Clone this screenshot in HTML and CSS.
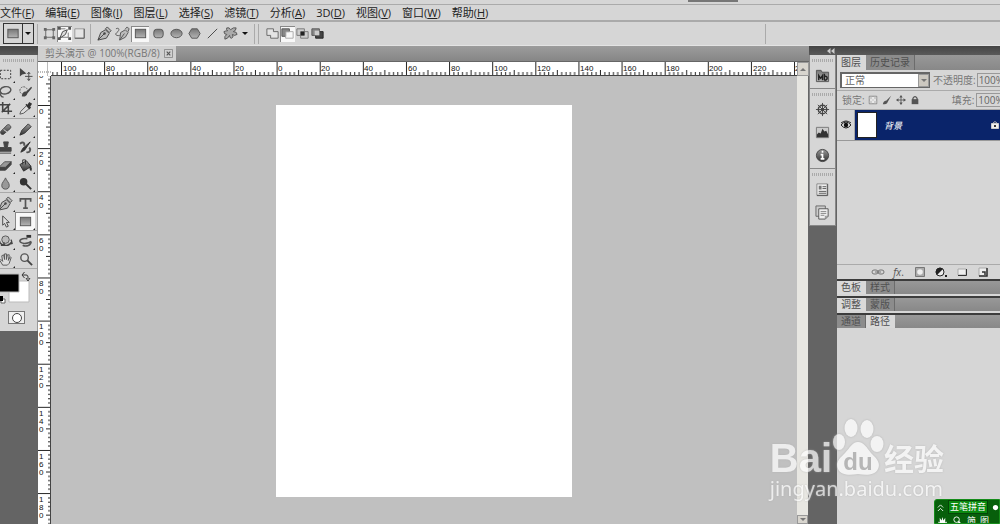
FILE: index.html
```html
<!DOCTYPE html>
<html lang="zh-CN">
<head>
<meta charset="utf-8">
<title>剪头演示 @ 100%(RGB/8)</title>
<link rel="stylesheet" href="styles.css">
</head>
<body>
<svg class="defs" aria-hidden="true">
  <defs>
    <linearGradient id="metal" x1="0" y1="0" x2="0" y2="1"><stop offset="0" stop-color="#777"/><stop offset="1" stop-color="#b4b4b4"/></linearGradient>
    <linearGradient id="dark" x1="0" y1="0" x2="0" y2="1"><stop offset="0" stop-color="#999"/><stop offset="1" stop-color="#333"/></linearGradient>
    <pattern id="ticks-x" x="10" y="0" width="43.12" height="13" patternUnits="userSpaceOnUse">
      <path d="M.5 0V13M4.8 10V13M9.1 10V13M13.4 10V13M17.7 10V13M22 8V13M26.4 10V13M30.7 10V13M35 10V13M39.3 10V13" stroke="#222" fill="none"/>
    </pattern>
    <pattern id="ticks-y" x="0" y="29" width="13" height="43.12" patternUnits="userSpaceOnUse">
      <path d="M0 .5H13M10 4.8H13M10 9.1H13M10 13.4H13M10 17.7H13M8 22H13M10 26.4H13M10 30.7H13M10 35H13M10 39.3H13" stroke="#222" fill="none"/>
    </pattern>
    <symbol id="pen" viewBox="0 0 16 16"><path d="M1 15l3-8 5-3 4 4-3 5zM9 3l2-2 4 4-2 2z" fill="#bbb" stroke="#444"/><path d="M1 15l7-7" stroke="#444"/><circle cx="8" cy="8" r="1.300" fill="#444"/></symbol>
    <symbol id="square" viewBox="0 0 16 16"><rect x="2.500" y="3.500" width="11" height="9" fill="url(#metal)" stroke="#555"/></symbol>
  </defs>
</svg>

<div class="app">
  <div class="titlestrip"><span class="titlestrip-handle"></span></div>

  <nav class="menubar" aria-label="主菜单">
    <button>文件(<u>F</u>)</button><button>编辑(<u>E</u>)</button><button>图像(<u>I</u>)</button><button>图层(<u>L</u>)</button><button>选择(<u>S</u>)</button><button>滤镜(<u>T</u>)</button><button>分析(<u>A</u>)</button><button>3D(<u>D</u>)</button><button>视图(<u>V</u>)</button><button>窗口(<u>W</u>)</button><button>帮助(<u>H</u>)</button>
  </nav>

  <div class="options">
    <button class="preset" aria-label="工具预设"><svg viewBox="0 0 16 16"><use href="#square"/></svg><span class="preset-arrow"></span></button>
    <span class="rule"></span>
    <div class="modes">
      <button aria-label="形状图层"><svg viewBox="0 0 16 16"><path d="M4 4h8v8H4z" fill="#ddd" stroke="#666"/><path d="M2 2h3v3H2zM11 2h3v3h-3zM2 11h3v3H2zM11 11h3v3h-3z" fill="#666"/></svg></button>
      <button class="on" aria-label="路径"><svg viewBox="0 0 16 16"><path d="M3 3h6M12 7v5M3 12h9" fill="none" stroke="#777"/><path d="M3 13l3-7 5-2-2 5z" fill="#ddd" stroke="#444"/><path d="M1 1h3v3H1zM12 1h3v3h-3zM1 12h3v3H1zM12 12h3v3h-3z" fill="#555"/></svg></button>
      <button aria-label="填充像素"><svg viewBox="0 0 16 16"><path d="M3 3h10v10H3z" fill="#e4e4e4" stroke="#999"/><path d="M3 13h10V3" fill="none" stroke="#555"/></svg></button>
    </div>
    <span class="rule"></span>
    <div class="shapes">
      <button aria-label="钢笔"><svg viewBox="0 0 16 16"><use href="#pen"/></svg></button>
      <button aria-label="自由钢笔"><svg viewBox="0 0 16 16"><path d="M5 15l1-8 5-3 3 3-3 5zM11 3l2-2 2 2-1 3" fill="#bbb" stroke="#555"/><path d="M5 15l5-7M1 3c4-2 4 2 1 4s0 4 3 3" fill="none" stroke="#555"/></svg></button>
      <button class="on" aria-label="矩形"><svg viewBox="0 0 16 16"><use href="#square"/></svg></button>
      <button aria-label="圆角矩形"><svg viewBox="0 0 16 16"><rect x="3" y="3.500" width="10" height="9" rx="3" fill="url(#metal)" stroke="#555"/></svg></button>
      <button aria-label="椭圆"><svg viewBox="0 0 16 16"><ellipse cx="8" cy="8" rx="6" ry="4.500" fill="url(#metal)" stroke="#555"/></svg></button>
      <button aria-label="多边形"><svg viewBox="0 0 16 16"><path d="M5 3h6l3 5-3 5H5L2 8z" fill="url(#metal)" stroke="#555"/></svg></button>
      <button aria-label="直线"><svg viewBox="0 0 16 16"><path d="M3 13L13 3" stroke="#444"/></svg></button>
      <button aria-label="自定形状"><svg viewBox="0 0 16 16"><path d="M4 2q3-1 4 2 3-3 6-2 0 3-3 4 4 0 4 3-3 2-5 0 2 3-1 4-2 0-2-3-2 4-5 4-1-3 2-5-3 0-3-3 2-1 4-1-2-1-1-3z" fill="#aaa" stroke="#555"/></svg></button>
      <button class="narrow" aria-label="几何选项"><span class="arrow"></span></button>
    </div>
    <span class="rule"></span><span class="rule"></span>
    <div class="combine">
      <button aria-label="添加到路径区域"><svg viewBox="0 0 16 16"><path d="M2 3h7v3h5v7H6v-3H2z" fill="#e4e4e4" stroke="#666"/></svg></button>
      <button class="on" aria-label="从路径区域减去"><svg viewBox="0 0 16 16"><path d="M2 3h8v3H6v5H2z" fill="#888" stroke="#555"/><path d="M6 6h8v7H6z" fill="none" stroke="#aaa"/></svg></button>
      <button aria-label="交叉路径区域"><svg viewBox="0 0 16 16"><path d="M2 3h8v7H2zM6 6h8v7H6z" fill="#ccc" stroke="#777"/><path d="M6 6h4v4H6z" fill="#222"/></svg></button>
      <button aria-label="重叠路径区域除外"><svg viewBox="0 0 16 16"><path d="M2 3h8v7H2z" fill="#888" stroke="#555"/><path d="M6 6h8v7H6z" fill="#444" stroke="#222"/><path d="M5 5h5v5H5z" fill="#ccc"/></svg></button>
    </div>
    <span class="rule rule-end"></span>
  </div>

  <div class="workspace">
    <aside class="toolbox">
      <div class="toolbox-head"></div>
      <div class="tools">
        <div class="gripper"></div>
        <div class="toolgroup">
          <button aria-label="矩形选框"><svg viewBox="0 0 16 16"><path d="M2.500 3.500h11v9h-11z" fill="none" stroke="#333" stroke-dasharray="2 1.500"/></svg></button>
          <button class="single" aria-label="移动"><svg viewBox="0 0 16 16"><path d="M2 1v9l2.500-2L9 7z" fill="#444"/><path d="M11.500 6v8M7.500 10h8M10 7.500l1.500-2 1.500 2M10 12.500l1.500 2 1.500-2" fill="none" stroke="#444"/></svg></button>
          <button aria-label="套索"><svg viewBox="0 0 16 16"><path d="M4 10C1 8 2 4 7 3s8 2 6 5-7 3-9 2-2 4 2 4" fill="none" stroke="#555" stroke-width="1.500"/></svg></button>
          <button aria-label="快速选择"><svg viewBox="0 0 16 16"><circle cx="6" cy="7" r="4" fill="none" stroke="#555" stroke-dasharray="2 1"/><path d="M4 13c1-5 3-5 5-5l5-5 1 1-5 6c-1 3-3 4-6 3z" fill="#444"/></svg></button>
          <button aria-label="裁剪"><svg viewBox="0 0 16 16"><path d="M5 1v10h10M1 4h10v10M4 12l9-9" fill="none" stroke="#444" stroke-width="1.700"/></svg></button>
          <button aria-label="吸管"><svg viewBox="0 0 16 16"><path d="M2 14l1-3 6-6 3 3-6 5z" fill="#ddd" stroke="#555"/><path d="M8 4l1-1 1 1 2-3 3 2-2 3 1 1-2 2z" fill="#333"/></svg></button>
        </div>
        <div class="toolgroup tall">
          <button aria-label="污点修复画笔"><svg viewBox="0 0 16 16"><path d="M3 10l7-7c2-1 5 2 3 4l-7 6c-2 1-4-1-3-3z" fill="url(#dark)" stroke="#444"/><path d="M6 8l4 3" stroke="#ddd"/></svg></button>
          <button aria-label="画笔"><svg viewBox="0 0 16 16"><path d="M2 14l2-5 7-7 3 3-7 7z" fill="url(#dark)" stroke="#333"/></svg></button>
          <button aria-label="仿制图章"><svg viewBox="0 0 16 16"><path d="M6 2h5l-1 6h4v4H2V8h5zM2 14h12" fill="#444" stroke="#444"/></svg></button>
          <button aria-label="历史记录画笔"><svg viewBox="0 0 16 16"><path d="M3 13l2-4 8-7-6 9z" fill="#333" stroke="#333"/><path d="M2 4c4-3 6 0 4 2M9 13c4 1 5-3 3-5" fill="none" stroke="#555" stroke-width="2"/></svg></button>
          <button aria-label="橡皮擦"><svg viewBox="0 0 16 16"><path d="M1 10l6-6h7l-6 6z" fill="#999" stroke="#555"/><path d="M1 10v3h7l6-6V4L8 10z" fill="#444" stroke="#444"/></svg></button>
          <button aria-label="油漆桶"><svg viewBox="0 0 16 16"><path d="M2 7l7-4 5 6-8 5z" fill="url(#dark)" stroke="#333"/><path d="M5 7V2h3v5" fill="none" stroke="#333"/><path d="M13 8q3 3 1 6-3-2-1-6z" fill="#333"/></svg></button>
          <button aria-label="模糊"><svg viewBox="0 0 16 16"><path d="M8 2c1 3 4 5 4 8s-2 4-4 4-4-1-4-4 3-5 4-8z" fill="#999" stroke="#555"/></svg></button>
          <button aria-label="减淡"><svg viewBox="0 0 16 16"><circle cx="6" cy="6" r="4" fill="#333"/><path d="M8 8l6 6" stroke="#333" stroke-width="2"/></svg></button>
        </div>
        <div class="toolgroup tall">
          <button aria-label="钢笔工具"><svg viewBox="0 0 16 16"><use href="#pen"/></svg></button>
          <button aria-label="文字"><svg viewBox="0 0 16 16"><path d="M2.500 6V3h11v3M8 3v10M5.500 13h5" fill="none" stroke="#555" stroke-width="1.800"/></svg></button>
          <button aria-label="路径选择"><svg viewBox="0 0 16 16"><path d="M5 2v10l2-2 2 4 2-1-2-4h3z" fill="#ddd" stroke="#444"/></svg></button>
          <button class="on" aria-label="矩形工具"><svg viewBox="0 0 16 16"><use href="#square"/></svg></button>
        </div>
        <div class="toolgroup tall">
          <button aria-label="3D 旋转"><svg viewBox="0 0 16 16"><circle cx="8" cy="6" r="4" fill="#bbb" stroke="#555"/><path d="M2 7c-2 4 9 8 12 2M3 12h4l-1-3M14 6l1 4-4 1" fill="none" stroke="#444" stroke-width="1.500"/></svg></button>
          <button aria-label="3D 环绕"><svg viewBox="0 0 16 16"><path d="M10 5C4 4 0 7 3 9s8 1 11-1M14 8c0 4-5 6-9 4" fill="none" stroke="#555" stroke-width="1.700"/><path d="M9 1h5v3H9z" fill="#333"/></svg></button>
          <button aria-label="抓手"><svg viewBox="0 0 16 16"><path d="M5 14L2 9l1-1 2 2-1-6 2-1 1 5V2h2v6l1-5h2l-1 6 2-4 1 1-2 6-2 2z" fill="#ddd" stroke="#555"/></svg></button>
          <button class="single" aria-label="缩放"><svg viewBox="0 0 16 16"><circle cx="7" cy="6" r="4" fill="#ddd" stroke="#555" stroke-width="1.500"/><path d="M10 9l5 5" stroke="#444" stroke-width="2"/></svg></button>
        </div>
        <div class="swatches">
          <svg viewBox="0 0 38 34" aria-label="前景色和背景色"><path d="M9 9h20v21H9z" fill="#fff" stroke="#bbb"/><path d="M-2 2h21v18H-2z" fill="#000" stroke="#bbb"/><path d="M23 3h3c2 0 2 1 2 4M24.500 0L22 3l2.500 3M26 6l2 3 2-3" fill="none" stroke="#333"/><path d="M1 27h4v4H1z" fill="#fff" stroke="#666"/><path d="M-2 24h5v5h-5z" fill="#000"/></svg>
        </div>
        <button class="quickmask" aria-label="快速蒙版"><svg viewBox="0 0 16 12"><circle cx="8" cy="6" r="4.500" fill="#fff" stroke="#444"/></svg></button>
      </div>
    </aside>

    <main class="document">
      <div class="doctabs"><div class="doctab"><span>剪头演示 @ 100%(RGB/8)</span><button aria-label="关闭"><svg viewBox="0 0 10 10"><path d="M.5.5h9v9h-9z" fill="none" stroke="#888"/><path d="M3 3l4 4M7 3L3 7" stroke="#555" stroke-width="1.300"/></svg></button></div></div>
      <div class="view">
        <svg class="corner" viewBox="0 0 13 13"><path d="M0 9.500h13M9.500 0v13" stroke="#777" stroke-dasharray="1 1"/></svg>
        <svg class="ruler-x"><rect width="100%" height="13" fill="url(#ticks-x)"/>
          <g class="nums"><text x="12" y="9">100</text><text x="55" y="9">80</text><text x="98" y="9">60</text><text x="141" y="9">40</text><text x="184" y="9">20</text><text x="227" y="9">0</text><text x="270" y="9">20</text><text x="313" y="9">40</text><text x="357" y="9">60</text><text x="400" y="9">80</text><text x="443" y="9">100</text><text x="486" y="9">120</text><text x="529" y="9">140</text><text x="572" y="9">160</text><text x="615" y="9">180</text><text x="658" y="9">200</text><text x="702" y="9">220</text><text x="744" y="9">240</text></g></svg>
        <button class="scroll-up" aria-label="向上滚动"><span class="arrow up"></span></button>
        <svg class="ruler-y"><rect width="13" height="100%" fill="url(#ticks-y)"/>
          <g class="nums"><text x="1" y="2">0</text><text x="1" y="38">0</text>
          <text><tspan x="1" y="81">2</tspan><tspan x="1" y="89">0</tspan></text>
          <text><tspan x="1" y="124">4</tspan><tspan x="1" y="132">0</tspan></text>
          <text><tspan x="1" y="167">6</tspan><tspan x="1" y="175">0</tspan></text>
          <text><tspan x="1" y="210">8</tspan><tspan x="1" y="218">0</tspan></text>
          <text><tspan x="1" y="253">1</tspan><tspan x="1" y="261">0</tspan><tspan x="1" y="269">0</tspan></text>
          <text><tspan x="1" y="296">1</tspan><tspan x="1" y="304">2</tspan><tspan x="1" y="312">0</tspan></text>
          <text><tspan x="1" y="340">1</tspan><tspan x="1" y="348">4</tspan><tspan x="1" y="356">0</tspan></text>
          <text><tspan x="1" y="383">1</tspan><tspan x="1" y="391">6</tspan><tspan x="1" y="399">0</tspan></text>
          <text><tspan x="1" y="426">1</tspan><tspan x="1" y="434">8</tspan><tspan x="1" y="442">0</tspan></text></g></svg>
        <div class="canvas"><div class="page"></div></div>
        <div class="scrollbar"><button aria-label="向下滚动"><span class="arrow down"></span></button></div>
      </div>
    </main>

    <aside class="right">
      <div class="right-head"><svg viewBox="0 0 8 6"><path d="M3.500 0v6L0 3zM7.500 0v6L4 3z" fill="#ccc"/></svg></div>
      <div class="right-body">
        <div class="dock">
          <div class="dockgroup"><div class="gripper"></div>
            <button aria-label="Mini Bridge"><svg viewBox="0 0 16 16"><path d="M1.500 2.500h5l1 2h7v10h-13z" fill="url(#metal)" stroke="#555"/><path d="M4 13V8l2 3 2-3v5M10 6v7M10 9c4-1 4 4 0 4" fill="none" stroke="#222" stroke-width="1.500"/></svg></button>
          </div>
          <div class="dockgroup"><div class="gripper"></div>
            <button aria-label="导航器"><svg viewBox="0 0 16 16"><circle cx="8" cy="8" r="4.500" fill="none" stroke="#444" stroke-width="1.500"/><path d="M8 1v14M1 8h14M3 3l10 10M13 3L3 13" stroke="#444"/><circle cx="8" cy="8" r="2" fill="#444"/></svg></button>
            <button aria-label="直方图"><svg viewBox="0 0 16 16"><path d="M1.500 2.500h13v11h-13z" fill="#ccc" stroke="#777"/><path d="M2 13v-3l2-2 2 1 2-5 2 3 2-1 2 4v3z" fill="#333"/></svg></button>
            <button aria-label="信息"><svg viewBox="0 0 16 16"><circle cx="8" cy="8" r="6.500" fill="url(#dark)" stroke="#444"/><path d="M8 3v2M6 7h2v4M6 11.500h4" fill="none" stroke="#fff" stroke-width="1.800"/></svg></button>
          </div>
          <div class="dockgroup"><div class="gripper"></div>
            <button aria-label="字符样式"><svg viewBox="0 0 16 16"><path d="M2 2h11v12H2z" fill="#eee" stroke="#888"/><path d="M13.500 2v12.500H2M8 5h4M8 7h4M4 10h8M4 12h8" fill="none" stroke="#555"/><path d="M4 4h3v4H4z" fill="#777"/></svg></button>
            <button aria-label="图层复合"><svg viewBox="0 0 16 16"><path d="M1 1h10v11H1z" fill="#ccc" stroke="#666"/><path d="M4 4h10v8l-3 3H4z" fill="#eee" stroke="#555"/><path d="M6 7h6M6 9h6M6 11h4M11 15v-3h3" fill="none" stroke="#888"/></svg></button>
          </div>
        </div>

        <div class="panels">
          <section class="panel layers">
            <div class="tabs"><button class="active">图层</button><button>历史记录</button></div>
            <div class="row blend">
              <label class="combo"><select aria-label="混合模式"><option>正常</option></select><span class="combo-arrow"><span class="arrow"></span></span></label>
              <label for="opacity">不透明度:</label><input id="opacity" value="100%">
            </div>
            <div class="row lock">
              <span class="locklabel">锁定:</span>
              <button aria-label="锁定透明像素"><svg viewBox="0 0 12 12"><path d="M1.500 1.500h9v9h-9z" fill="#eee" stroke="#777"/><path d="M2 2h3v3H2zM7 2h3v3H7zM5 5h2v2H5zM2 7h3v3H2zM7 7h3v3H7z" fill="#ccc"/></svg></button>
              <button aria-label="锁定图像像素"><svg viewBox="0 0 12 12"><path d="M1 11c1-4 3-4 4-4l6-6-4 7c-1 3-3 3-6 3z" fill="#555"/></svg></button>
              <button aria-label="锁定位置"><svg viewBox="0 0 12 12"><path d="M6 1v10M1 6h10" stroke="#555"/><path d="M4 3l2-3 2 3zM4 9l2 3 2-3zM3 4L0 6l3 2zM9 4l3 2-3 2z" fill="#555"/></svg></button>
              <button aria-label="锁定全部"><svg viewBox="0 0 12 12"><path d="M3.500 6V4q2.500-4 5 0v2" fill="none" stroke="#555" stroke-width="1.500"/><path d="M2 5h8v6H2z" fill="#555"/></svg></button>
              <label class="push" for="fill">填充:</label><input id="fill" value="100%">
            </div>
            <div class="layer">
              <button class="eye" aria-label="可见性"><svg viewBox="0 0 12 10"><path d="M1 5q5-6 10 0-5 6-10 0z" fill="#ddd" stroke="#222"/><circle cx="6" cy="5" r="2.200" fill="#111"/><path d="M1 3q5-4 10 0" fill="none" stroke="#222"/></svg></button>
              <div class="layer-main"><span class="thumb"></span><span class="layer-name">背景</span><svg class="layer-lock" viewBox="0 0 8 10"><path d="M2 4V3q2-3 4 0v1" fill="none" stroke="#aaa"/><path d="M.5 3.500h7v5h-7z" fill="#eee" stroke="#ccc"/><path d="M3 5h2v2H3z" fill="#333"/></svg></div>
            </div>
            <div class="layer-space"></div>
            <div class="layer-actions">
              <button aria-label="链接图层"><svg viewBox="0 0 14 12"><rect x="1" y="4" width="6" height="4" rx="2" fill="none" stroke="#777"/><rect x="7" y="4" width="6" height="4" rx="2" fill="none" stroke="#777"/><path d="M4 6h6" stroke="#777"/></svg></button>
              <button class="fx" aria-label="图层样式"><i>fx</i>.</button>
              <button aria-label="添加蒙版"><svg viewBox="0 0 14 12"><path d="M2.500 1.500h9v9h-9z" fill="#aaa" stroke="#777"/><circle cx="7" cy="6" r="2.800" fill="#eee"/></svg></button>
              <button aria-label="调整图层"><svg viewBox="0 0 14 12"><circle cx="6" cy="6" r="4" fill="#eee" stroke="#222"/><path d="M3 9a4 4 0 0 1 6-6z" fill="#222"/><path d="M11 9h2v2h-2z" fill="#222"/></svg></button>
              <button aria-label="新建组"><svg viewBox="0 0 14 12"><path d="M3 3h8v6H3z" fill="#eee" stroke="#aaa"/><path d="M3 9.500h8.500V3" fill="none" stroke="#333"/></svg></button>
              <button aria-label="新建图层"><svg viewBox="0 0 14 12"><path d="M3 2h8v8H3z" fill="#eee" stroke="#aaa"/><path d="M11 2v8H3M6 6h3v3" fill="none" stroke="#333" stroke-width="1.500"/></svg></button>
              <button aria-label="删除图层"><svg viewBox="0 0 14 12"><path d="M3 3h8M4 4v6h6V4M6 2h2" fill="none" stroke="#777"/></svg></button>
            </div>
          </section>
          <section class="panel"><div class="tabs"><button class="active">色板</button><button>样式</button></div></section>
          <section class="panel"><div class="tabs"><button class="active">调整</button><button>蒙版</button></div></section>
          <section class="panel paths"><div class="tabs"><button>通道</button><button class="active">路径</button></div></section>
        </div>
      </div>
    </aside>
  </div>

  <div class="watermark">
    <div class="wm-top"><span class="wm-bai">Bai</span><svg viewBox="0 0 52 58"><g fill="#fff"><ellipse cx="7" cy="24" rx="6" ry="8"/><ellipse cx="19" cy="10" rx="6.500" ry="9"/><ellipse cx="35" cy="11" rx="6.500" ry="9"/><ellipse cx="45" cy="26" rx="6.500" ry="8"/><path d="M26 24c6 0 9 6 13 11 5 5 10 9 7 16s-13 6-20 5c-7 1-17 2-20-5s2-11 7-16 7-11 13-11z"/></g><text x="26" y="52">du</text></svg><span class="wm-cn">经验</span></div>
    <div class="wm-url">jingyan.baidu.com</div>
  </div>

  <div class="ime">
    <div class="ime-row"><svg viewBox="0 0 8 10"><path d="M1 5l3-3 3 3M1 9l3-3 3 3" fill="none" stroke="#fff"/></svg><span class="ime-name">五笔拼音</span><svg viewBox="0 0 8 10"><circle cx="4" cy="5" r="3" fill="#fff"/></svg></div>
    <div class="ime-row second"><svg viewBox="0 0 12 12"><path d="M4 12L1 6l2 1V2l2 3 1-4 1 4 2-3v5l2-1-2 6z" fill="#fff"/></svg><svg viewBox="0 0 12 12"><circle cx="5" cy="4" r="3" fill="none" stroke="#fff"/><path d="M7 6l4 5" stroke="#fff" stroke-width="2"/></svg><span>简</span><span>图</span></div>
  </div>
</div>
</body>
</html>
```
FILE: styles.css
```css
* { box-sizing: border-box; }
body { margin: 0; background: #646464; font-family: "Open Sans", "Noto Sans CJK SC", sans-serif; font-size: 11px; color: #333; }
button { appearance: none; border: 0; padding: 0; margin: 0; background: none; font: inherit; color: inherit; display: flex; align-items: center; justify-content: center; }
svg { display: block; flex: none; }
.defs { position: absolute; width: 0; height: 0; }
.app { position: relative; display: flex; flex-direction: column; height: 100vh; overflow: hidden; }

.titlestrip { flex: none; height: 4px; background: #d6d6d6; display: flex; justify-content: flex-end; padding-right: 262px; }
.titlestrip-handle { width: 50px; height: 2px; background: #777; }
.menubar { flex: none; height: 18px; display: flex; gap: 11px; background: #d6d6d6; border-top: 1px solid #aaa; border-bottom: 2px solid #aaa; white-space: nowrap; line-height: 15px; }
.menubar button { color: #222; flex: none; }
.menubar u { text-underline-offset: 1px; }

.options { flex: none; height: 24px; display: flex; align-items: center; background: #d6d6d6; gap: 3px; padding-left: 3px; border-bottom: 1px solid #e4e4e4; }
.options svg { width: 15px; height: 15px; }
.preset { width: 31px; height: 21px; border: 1px solid #333; }
.preset svg { flex: 1; }
.preset-arrow { width: 11px; height: 19px; border-left: 1px solid #333; display: flex; align-items: center; justify-content: center; }
.preset-arrow::before, .arrow { content: ""; border: 3px solid transparent; border-top-color: #111; border-bottom: 0; }
.arrow.up { border-top: 0; border-bottom: 3px solid #777; }
.arrow.down { border-top-color: #777; }
.rule { width: 1px; height: 20px; background: #aaa; }
.rule-end { margin-left: auto; margin-right: 234px; }
.modes, .shapes, .combine { display: flex; align-items: center; }
.modes button, .combine button { width: 15px; height: 16px; }
.combine { padding-left: 3px; }
.shapes { padding-left: 1px; }
.modes { padding-left: 1px; }
.shapes button { width: 18px; height: 16px; }
.shapes .narrow { width: 12px; }
.options .on, .toolgroup .on { background: #f8f8f8; box-shadow: inset 1px 1px #888; }

.workspace { flex: 1; min-height: 0; display: flex; }
.toolbox { flex: 0 0 38px; overflow: hidden; background: #646464; }
.toolbox-head, .right-head { height: 9px; background: linear-gradient(#444, #5a5a5a); }
.tools { background: #d6d6d6; border-right: 1px solid #999; display: flex; flex-direction: column; padding-bottom: 7px; }
.gripper { height: 3px; margin: 4px 3px; background: repeating-linear-gradient(90deg, #aaa 0 1px, #d6d6d6 1px 2px); }
.toolgroup { display: grid; grid-template-columns: 20px 20px; margin-left: -5px; padding-bottom: 1px; border-bottom: 1px solid #aaa; margin-bottom: 1px; }
.toolgroup button { height: 17px; position: relative; }
.toolgroup.tall button { height: 18px; }
.tall { padding-bottom: 0; }
.toolgroup svg { width: 15px; height: 15px; }
.toolgroup button::after { content: ""; position: absolute; right: 0; bottom: 0; border: 1px solid #222; border-top-color: transparent; border-left-color: transparent; }
.toolgroup .single::after { display: none; }
.swatches svg { width: 38px; height: 34px; }
.swatches { padding-top: 2px; height: 41px; }
.quickmask { width: 17px; height: 13px; margin-left: 8px; border: 1px solid #777; background: #eee; }
.quickmask svg { width: 16px; height: 12px; }

.document { flex: 1; min-width: 0; display: flex; flex-direction: column; }
.doctabs { flex: none; height: 16px; display: flex; background: linear-gradient(#9c9c9c, #868686); border-bottom: 1px solid #666; }
.doctab { display: flex; align-items: center; gap: 4px; background: #d0d0d0; padding: 0 3px 0 7px; color: #777; font-size: 10px; line-height: 15px; white-space: nowrap; }
.doctab svg { width: 9px; height: 9px; }
.view { flex: 1; min-height: 0; display: grid; grid-template-columns: 13px 1fr 12px; grid-template-rows: 14px 1fr; }
.corner, .ruler-x, .ruler-y { background: #fff; width: 100%; height: 100%; min-width: 0; min-height: 0; overflow: hidden; }
.ruler-x { border-bottom: 1px solid #444; }
.ruler-y { border-right: 1px solid #444; }
.nums { font-family: "Liberation Sans", sans-serif; font-size: 8px; fill: #111; }
.canvas { background: #c0c0c0; display: grid; place-items: center; min-height: 0; overflow: hidden; padding-top: 2px; }
.page { width: 296px; height: 392px; background: #fff; }
.scroll-up, .scrollbar button { background: #d8d5ce; border: 1px solid #999; }
.scrollbar { background: #e8e7e2; border-right: 1px solid #666; display: flex; flex-direction: column; justify-content: flex-end; }
.scrollbar button { height: 9px; }

.right { flex: 0 0 191px; min-width: 0; display: flex; flex-direction: column; overflow: hidden; background: #646464; }
.right-head { flex: none; padding: 2px 0 0 18px; }
.right-head svg { width: 8px; height: 6px; }
.right-body { flex: 1; min-height: 0; display: flex; gap: 1px; }
.dock { flex: 0 0 27px; }
.dockgroup { background: #d6d6d6; border: 1px solid #888; border-top: 0; padding-bottom: 1px; }
.dockgroup .gripper { margin: 0 2px; border: 0 solid #d6d6d6; border-width: 4px 0 2px; height: 9px; }
.dockgroup button { width: 25px; height: 23px; }
.dockgroup svg { width: 15px; height: 15px; }

.panels { flex: 1; min-width: 0; display: flex; flex-direction: column; }
.panel { flex: none; background: #d6d6d6; border-top: 2px solid #3c3c3c; padding-bottom: 2px; }
.layers { border-top: 0; padding: 0; }
.paths { flex: 1; }
.tabs { height: 13px; display: flex; background: linear-gradient(#989898, #888); }
.layers .tabs { height: 15px; }
.tabs button { padding: 0 4px; font-size: 10px; color: #505050; border-right: 1px solid #6c6c6c; line-height: 13px; background: #8c8c8c; min-width: 28px; white-space: nowrap; }
.tabs .active { background: #d9d9d9; border-color: #d9d9d9; }
.row { height: 20px; display: flex; align-items: center; color: #777; font-size: 10px; border-bottom: 1px solid #aaa; white-space: nowrap; line-height: 16px; }
.row label { flex: none; }
.row input { flex: none; width: 40px; height: 14px; padding: 0 1px; border: 1px solid #999; background: #d6d6d6; font: inherit; color: #666; }
.blend { padding-left: 3px; gap: 1px; height: 21px; }
.combo { width: 90px; height: 16px; position: relative; margin-right: 2px; }
.combo select { appearance: none; display: block; width: 100%; height: 100%; border: 2px solid #666; border-right-width: 1px; border-bottom-width: 1px; background: #fff; padding: 0 3px; font: inherit; color: #666; line-height: 13px; }
.combo-arrow { position: absolute; right: 1px; top: 2px; width: 11px; height: 13px; background: #ccc8c0; border: 1px solid #999; pointer-events: none; display: flex; align-items: center; justify-content: center; }
.combo-arrow .arrow { border-top-color: #777; }
.lock { padding-left: 5px; gap: 2px; height: 19px; }
.lock button { flex: none; width: 12px; height: 12px; }
.lock svg { width: 10px; height: 10px; }
.lock .push { margin-left: 29px; }
.layer { height: 31px; display: flex; border-bottom: 1px solid #999; }
.eye { width: 18px; border-right: 1px solid #aaa; }
.eye svg { width: 12px; height: 10px; }
.layer-main { flex: 1; background: #0a246a; display: flex; align-items: center; gap: 8px; padding-left: 3px; color: #fff; }
.thumb { width: 18px; height: 24px; background: #fff; outline: 1px solid #222; }
.layer-name { font-size: 9px; font-style: italic; }
.layer-lock { width: 8px; height: 10px; margin-left: auto; margin-right: 1px; }
.layer-space { height: 123px; }
.layer-actions { height: 15px; border-top: 1px solid #aaa; display: flex; align-items: center; padding-left: 30px; width: 180px; }
.layer-actions button { flex: none; width: 21px; height: 12px; }
.layer-actions svg { width: 14px; height: 12px; }
.fx { font-size: 10px; color: #555; }

.watermark { position: absolute; right: 56px; bottom: 22px; opacity: .72; color: #fff; text-shadow: 0 0 2px #aaa; white-space: nowrap; }
.wm-top { display: flex; align-items: flex-end; height: 58px; }
.wm-bai { font: bold 40px/36px "Liberation Sans", sans-serif; }
.wm-top svg { width: 52px; height: 58px; filter: drop-shadow(0 0 1px #aaa); }
.wm-top text { font: bold 24px "Liberation Sans", sans-serif; fill: #aaa; text-anchor: middle; text-shadow: none; }
.wm-cn { font: bold 30px/38px "Noto Sans CJK SC", sans-serif; }
.wm-url { font: 20px/26px "Noto Sans", sans-serif; }

.ime { position: absolute; right: 0; bottom: 0; width: 66px; height: 25px; overflow: hidden; background: #075f0b; border: 1px solid #168c1b; border-radius: 3px 0 0 0; color: #fff; }
.ime-row { display: flex; align-items: center; gap: 4px; height: 14px; padding-left: 2px; line-height: 12px; white-space: nowrap; font-size: 9px; }
.ime-row svg { width: 7px; height: 9px; }
.ime-name { background: #0b8a10; border: 1px solid #054508; padding: 0 1px; line-height: 12px; }
.second svg { width: 11px; height: 11px; }
```
